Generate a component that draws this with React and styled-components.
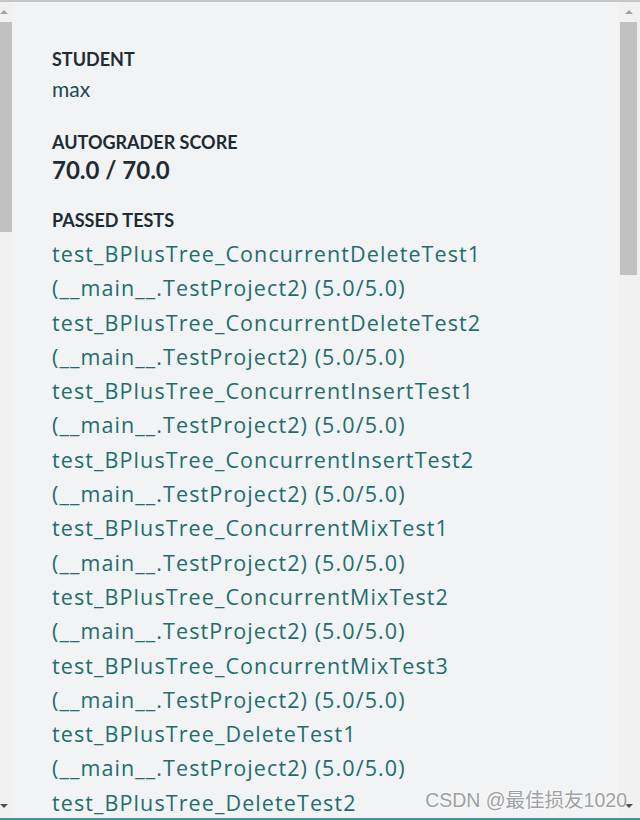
import styled, { createGlobalStyle } from "styled-components";

const GlobalStyle = createGlobalStyle`
  html, body {
    margin: 0;
    padding: 0;
    background: #f1f3f5;
  }
`;

const Frame = styled.div`
  position: relative;
  display: flex;
  width: 640px;
  height: 820px;
  box-sizing: border-box;
  border-top: 2px solid #c3c5c7;
  border-bottom: 2px solid #3a9a98;
  background: #f1f3f5;
  overflow: hidden;
  font-family: Lato, "Noto Sans", sans-serif;
`;

const ScrollBar = styled.div`
  display: flex;
  flex-direction: column;
  align-items: ${(p) => (p.$side === "left" ? "flex-start" : "flex-end")};
  width: ${(p) => (p.$side === "left" ? "12px" : "19px")};
  padding-right: ${(p) => (p.$side === "left" ? "0" : "3px")};
  background: #f1f1f1;
  flex-shrink: 0;
`;

const Arrow = styled.div`
  display: flex;
  align-items: ${(p) => (p.$down ? "flex-end" : "center")};
  justify-content: center;
  width: ${(p) => p.$w}px;
  height: 20px;
  padding-bottom: ${(p) => (p.$down ? "10px" : "0")};
  box-sizing: border-box;
  &::after {
    content: "";
    border-left: 4px solid transparent;
    border-right: 4px solid transparent;
    ${(p) =>
      p.$down
        ? "border-top: 4px solid #505050;"
        : "border-bottom: 4px solid #a3a3a3;"}
  }
`;

const Thumb = styled.div`
  width: ${(p) => p.$w}px;
  height: ${(p) => p.$h}px;
  background: #c1c1c1;
`;

const Spacer = styled.div`
  flex: 1;
`;

const Content = styled.div`
  flex: 1;
  padding: 44px 0 0 40px;
  min-width: 0;
`;

const Section = styled.section`
  margin-bottom: ${(p) => p.$gap || 0}px;
`;

const Label = styled.div`
  font-size: 18px;
  font-weight: 700;
  line-height: 26px;
  color: #1d2b33;
`;

const Value = styled.div`
  margin-top: 2px;
  font-size: 21px;
  line-height: 30px;
  color: #22474f;
`;

const Score = styled.div`
  margin-top: 1px;
  font-size: 24px;
  font-weight: 700;
  line-height: 28px;
  color: #1d2b33;
`;

const TestList = styled.ul`
  list-style: none;
  margin: 4px 0 0;
  padding: 0;
`;

const TestItem = styled.li`
  font-family: "Open Sans", Lato, sans-serif;
  font-size: 21.5px;
  letter-spacing: 1.1px;
  line-height: 34.3px;
  color: #1f6d6c;
`;

const TestLine = styled.span`
  display: block;
  white-space: nowrap;
`;

const Watermark = styled.div`
  position: absolute;
  right: 13px;
  bottom: 5px;
  font-family: "Liberation Sans", "Noto Sans CJK SC", sans-serif;
  font-size: 19.5px;
  color: #a0a0a0;
  text-shadow: 0 0 2px #ffffff, 0 0 2px #ffffff;
`;

const tests = [
  "ConcurrentDeleteTest1",
  "ConcurrentDeleteTest2",
  "ConcurrentInsertTest1",
  "ConcurrentInsertTest2",
  "ConcurrentMixTest1",
  "ConcurrentMixTest2",
  "ConcurrentMixTest3",
  "DeleteTest1",
  "DeleteTest2",
];

const App = () => {
  return (
    <>
      <GlobalStyle />
      <Frame>
        <ScrollBar $side="left">
          <Arrow $w={8} />
          <Thumb $w={12} $h={210} />
          <Spacer />
          <Arrow $w={8} $down />
        </ScrollBar>

        <Content>
          <Section $gap={25}>
            <Label>STUDENT</Label>
            <Value>max</Value>
          </Section>
          <Section $gap={23}>
            <Label>AUTOGRADER SCORE</Label>
            <Score>70.0 / 70.0</Score>
          </Section>
          <Section>
            <Label>PASSED TESTS</Label>
            <TestList>
              {tests.map((t) => (
                <TestItem key={t}>
                  <TestLine>test_BPlusTree_{t}</TestLine>
                  <TestLine>(__main__.TestProject2) (5.0/5.0)</TestLine>
                </TestItem>
              ))}
            </TestList>
          </Section>
        </Content>

        <ScrollBar $side="right">
          <Arrow $w={17} />
          <Thumb $w={17} $h={253} />
          <Spacer />
          <Arrow $w={17} $down />
        </ScrollBar>

        <Watermark>CSDN @最佳损友1020</Watermark>
      </Frame>
    </>
  );
};

export default App;
